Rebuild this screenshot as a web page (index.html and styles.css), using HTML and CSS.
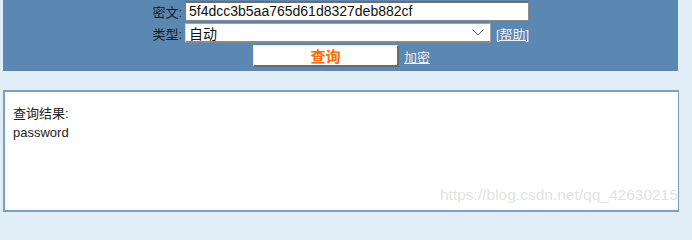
FILE: index.html
```html
<!DOCTYPE html>
<html lang="zh-CN">
<head>
<meta charset="utf-8">
<title>MD5 查询</title>
<link rel="stylesheet" href="styles.css">
</head>
<body>
<div class="page">
  <form class="panel">
    <div class="row">
      <label class="label">密文:</label>
      <div class="input">5f4dcc3b5aa765d61d8327deb882cf</div>
    </div>
    <div class="row row-gap">
      <label class="label">类型:</label>
      <div class="select">
        <span>自动</span>
        <svg class="chev" width="12" height="7" viewBox="0 0 12 7"><path d="M0.5 0.5 L6 6 L11.5 0.5" fill="none" stroke="#666" stroke-width="1"/></svg>
      </div>
      <a class="link help" href="#">[帮助]</a>
    </div>
    <div class="row row-gap">
      <div class="button">查询</div>
      <a class="link enc" href="#">加密</a>
    </div>
  </form>
  <div class="result">
    <div class="result-title">查询结果:</div>
    <div class="result-value">password</div>
  </div>
  <div class="watermark">https://blog.csdn.net/qq_42630215</div>
</div>
</body>
</html>
```
FILE: styles.css
```css
html, body {
  margin: 0;
  padding: 0;
  background: #e1edf7;
}
body {
  font-family: "Liberation Sans", "Noto Sans CJK SC", sans-serif;
  font-size: 13px;
  color: #222;
}
.page {
  position: relative;
  width: 692px;
  height: 214px;
  overflow: hidden;
}
.panel {
  margin: 0 0 0 3px;
  width: 675px;
  height: 71px;
  box-sizing: border-box;
  padding-top: 1px;
  background: #5b87b3;
}
.row {
  display: flex;
  align-items: center;
}
.row-gap {
  margin-top: 2px;
}
.label {
  width: 179px;
  text-align: right;
  color: #1a1a1a;
  padding-right: 3px;
}
.input {
  width: 344px;
  height: 20px;
  box-sizing: border-box;
  background: #fff;
  border: 1px solid #8a8a8a;
  border-top: 2px solid #6e6e6e;
  border-left: 1px solid #7a7a7a;
  padding-left: 3px;
  font-size: 14px;
  line-height: 16px;
  color: #111;
}
.select {
  width: 306px;
  height: 20px;
  box-sizing: border-box;
  background: #fff;
  border: 1px solid #a0a0a0;
  border-bottom: 2px solid #8a8a8a;
  border-left: 1px solid #d8d8d8;
  padding: 0 6px 0 3px;
  display: flex;
  align-items: center;
  justify-content: space-between;
  font-size: 14px;
  color: #111;
}
.chev {
  display: block;
}
.link {
  color: #eef3f9;
  text-decoration: underline;
  font-size: 13px;
}
.help {
  margin-left: 5px;
}
.button {
  margin-left: 250px;
  width: 146px;
  height: 22px;
  box-sizing: border-box;
  background: #fff;
  border-top: 1px solid #e8e8e8;
  border-left: 1px solid #e8e8e8;
  border-right: 2px solid #6a6a6a;
  border-bottom: 2px solid #6a6a6a;
  display: flex;
  align-items: center;
  justify-content: center;
  color: #ff6a00;
  font-weight: bold;
  font-size: 15px;
}
.enc {
  margin-left: 5px;
}
.result {
  margin: 19px 0 0 3px;
  width: 676px;
  height: 122px;
  box-sizing: border-box;
  background: #fff;
  border: 2px solid #7aa0c8;
  border-right: 1px solid #7aa0c8;
  padding: 12px 0 0 8px;
  line-height: 19px;
}
.watermark {
  position: absolute;
  left: 440px;
  top: 186px;
  font-family: "Liberation Sans", sans-serif;
  font-size: 15.5px;
  color: rgba(210, 210, 210, 0.65);
  text-shadow: 0 0 1px rgba(255, 255, 255, 0.6);
  white-space: nowrap;
}
```
